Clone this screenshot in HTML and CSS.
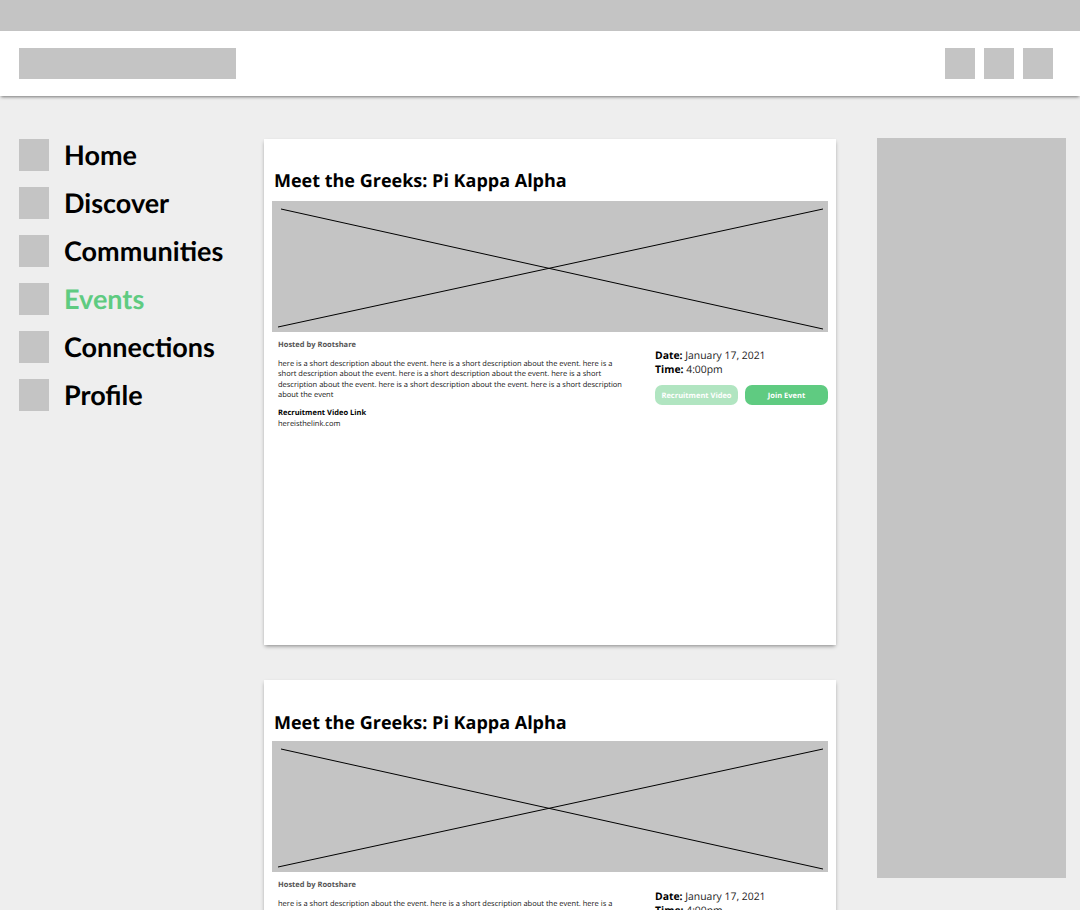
FILE: index.html
```html
<!DOCTYPE html>
<html lang="en">
<head>
<meta charset="utf-8">
<title>Events</title>
<link rel="stylesheet" href="styles.css">
</head>
<body>
<div class="frame">
  <div class="topbar"></div>
  <header class="header">
    <div class="ph logo"></div>
    <div class="header-actions">
      <div class="ph action"></div>
      <div class="ph action"></div>
      <div class="ph action"></div>
    </div>
  </header>
  <main class="main">
    <nav class="nav">
      <a class="nav-item"><span class="ph nav-icon"></span><span>Home</span></a>
      <a class="nav-item"><span class="ph nav-icon"></span><span>Discover</span></a>
      <a class="nav-item"><span class="ph nav-icon"></span><span>Communities</span></a>
      <a class="nav-item active"><span class="ph nav-icon"></span><span>Events</span></a>
      <a class="nav-item"><span class="ph nav-icon"></span><span>Connections</span></a>
      <a class="nav-item"><span class="ph nav-icon"></span><span>Profile</span></a>
    </nav>
    <section class="feed">
      <article class="card">
        <h2 class="card-title">Meet the Greeks: Pi Kappa Alpha</h2>
        <svg class="banner" viewBox="0 0 556 131" aria-hidden="true">
          <line x1="9" y1="8" x2="551" y2="128"/>
          <line x1="6" y1="126" x2="551" y2="8"/>
        </svg>
        <div class="details">
          <div class="about">
            <p class="host">Hosted by Rootshare</p>
            <p class="desc">here is a short description about the event. here is a short description about the event. here is a short description about the event. here is a short description about the event. here is a short description about the event. here is a short description about the event. here is a short description about the event</p>
            <p class="link-label">Recruitment Video Link</p>
            <p class="link">hereisthelink.com</p>
          </div>
          <div class="when">
            <p class="when-line"><b>Date:</b> January 17, 2021</p>
            <p class="when-line"><b>Time:</b> 4:00pm</p>
            <div class="buttons">
              <a class="btn btn-light">Recruitment Video</a>
              <a class="btn">Join Event</a>
            </div>
          </div>
        </div>
      </article>
      <article class="card card-next">
        <h2 class="card-title">Meet the Greeks: Pi Kappa Alpha</h2>
        <svg class="banner" viewBox="0 0 556 131" aria-hidden="true">
          <line x1="9" y1="8" x2="551" y2="128"/>
          <line x1="6" y1="126" x2="551" y2="8"/>
        </svg>
        <div class="details">
          <div class="about">
            <p class="host">Hosted by Rootshare</p>
            <p class="desc">here is a short description about the event. here is a short description about the event. here is a short description about the event. here is a short description about the event. here is a short description about the event. here is a short description about the event. here is a short description about the event</p>
            <p class="link-label">Recruitment Video Link</p>
            <p class="link">hereisthelink.com</p>
          </div>
          <div class="when">
            <p class="when-line"><b>Date:</b> January 17, 2021</p>
            <p class="when-line"><b>Time:</b> 4:00pm</p>
            <div class="buttons">
              <a class="btn btn-light">Recruitment Video</a>
              <a class="btn">Join Event</a>
            </div>
          </div>
        </div>
      </article>
    </section>
    <aside class="ph rail"></aside>
  </main>
</div>
</body>
</html>
```
FILE: styles.css
```css
* { box-sizing: border-box; }
html, body { margin: 0; padding: 0; background: #fff; overflow: hidden; }
body {
  width: 1081px;
  height: 912px;
  font-family: "Open Sans", sans-serif;
  color: #000;
  text-rendering: geometricPrecision;
}
p, h2 { margin: 0; }

.frame { width: 1080px; height: 910px; background: #eee; overflow: hidden; }
.ph { background: #c4c4c4; }

.topbar { height: 31px; background: #c4c4c4; }
.header {
  position: relative;
  height: 65px;
  padding: 17px 27px 0 19px;
  display: flex;
  justify-content: space-between;
  align-items: flex-start;
  background: #fff;
  box-shadow: 0 2px 3px -1px rgba(0, 0, 0, .5);
}
.logo { width: 217px; height: 31px; }
.header-actions { display: flex; gap: 9px; }
.action { width: 30px; height: 31px; }

.main { display: flex; align-items: flex-start; padding: 43px 15px 0 19px; }

.nav { width: 245px; display: flex; flex-direction: column; gap: 16px; flex: none; }
.nav-item {
  display: flex;
  align-items: center;
  gap: 15px;
  height: 32px;
  font-family: Lato, sans-serif;
  font-weight: 700;
  font-size: 27px;
  line-height: 32px;
  color: #000;
}
.nav-icon { width: 30px; height: 32px; flex: none; }
.nav-item.active { color: #5fcb81; }

.feed { width: 572px; flex: none; display: flex; flex-direction: column; gap: 35px; }
.card {
  height: 506px;
  padding: 0 8px;
  background: #fff;
  box-shadow: 0 2px 4px -1px rgba(0, 0, 0, .45);
}
.card-title {
  height: 62px;
  padding: 30px 0 0 2px;
  font-size: 18px;
  font-weight: 700;
  line-height: 25px;
}
.card-next .card-title { height: 61px; padding-top: 31px; }
.banner { display: block; width: 556px; height: 131px; background: #c4c4c4; }
.banner line { stroke: #000; stroke-width: 1; }

.details { display: flex; padding-left: 6px; }
.about { width: 377px; flex: none; padding-top: 8px; }
.host { font-size: 7.5px; font-weight: 700; line-height: 11px; color: #555; }
.desc { width: 346px; margin-top: 7.5px; font-size: 7.5px; line-height: 10.5px; color: #111; }
.link-label { margin-top: 7px; font-size: 7.5px; font-weight: 700; line-height: 10.5px; }
.link { margin-top: .5px; font-size: 7.5px; line-height: 10.5px; color: #111; }

.when { flex: 1; padding-top: 16.5px; }
.card-next .when { padding-top: 17.5px; }
.when-line { font-size: 10.4px; line-height: 14px; color: #222; }
.when-line b { color: #000; font-weight: 700; }
.buttons { display: flex; gap: 7px; margin-top: 8.5px; }
.btn {
  width: 83px;
  height: 20px;
  padding-top: 1px;
  border-radius: 7px;
  display: flex;
  align-items: center;
  justify-content: center;
  font-size: 7.5px;
  font-weight: 700;
  color: #fff;
  background: #5fcb81;
}
.btn-light { background: #b1e5c1; }

.rail { width: 189px; height: 740px; margin: -1px 0 0 41px; flex: none; }
```
